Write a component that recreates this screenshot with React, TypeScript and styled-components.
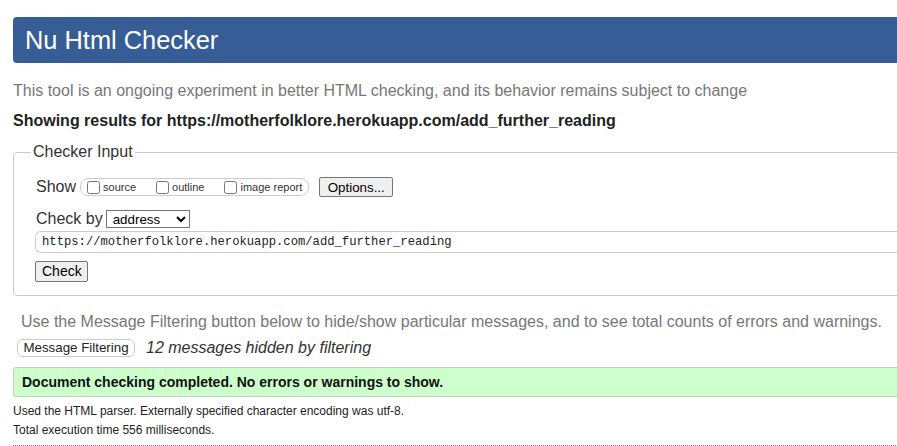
import React from "react";
import styled, { createGlobalStyle } from "styled-components";

const Global = createGlobalStyle`
  html, body { margin: 0; padding: 0; background: #fff; overflow: hidden; }
  body { font-family: "Liberation Sans", Arial, sans-serif; color: #222; }
`;

const Page = styled.div`
  width: 1000px;
  padding-left: 13px;
  box-sizing: border-box;
`;

const Header = styled.h1`
  margin: 17px 0 0;
  height: 46px;
  line-height: 46px;
  padding: 0 12px;
  background: #365d95;
  color: #fff;
  font-size: 25.4px;
  font-weight: normal;
  border-radius: 4px;
`;

const Intro = styled.p`
  margin: 19px 0 0;
  font-size: 16px;
  line-height: 18px;
  color: #777;
`;

const Results = styled.p`
  margin: 12px 0 0;
  font-size: 16px;
  line-height: 18px;
  font-weight: bold;
  color: #222;
`;

const Fieldset = styled.fieldset`
  margin: 13px 0 0;
  padding: 0 0 13px 22px;
  border: 1px solid #ccc;
  border-radius: 4px;
  min-width: 0;
`;

const Legend = styled.legend`
  margin-left: -5px;
  padding: 0 2px;
  font-size: 16px;
  line-height: 18px;
  color: #333;
`;

const Row = styled.div<{ $top: number }>`
  display: flex;
  align-items: center;
  margin-top: ${(p) => p.$top}px;
  min-height: 20px;
`;

const RowLabel = styled.span`
  font-size: 16px;
  line-height: 18px;
  color: #333;
  margin-right: 4px;
`;

const ShowBox = styled.span`
  display: inline-flex;
  align-items: center;
  height: 16px;
  padding: 0 6px;
  border: 1px solid #ccc;
  border-radius: 8px;
`;

const CheckLabel = styled.label<{ $last?: boolean }>`
  display: inline-flex;
  align-items: flex-end;
  font-size: 11px;
  line-height: 13px;
  color: #333;
  margin-right: ${(p) => (p.$last ? 0 : 20)}px;
`;

const Check = styled.input`
  margin: 0 3px 0 0;
  width: 13px;
  height: 13px;
`;

const NativeButton = styled.button`
  font-family: "Liberation Sans", Arial, sans-serif;
  font-size: 13.33px;
  color: #000;
  background: #efefef;
  border: 1px solid #767676;
  border-radius: 2px;
  padding: 1px 6px;
  line-height: 15px;
`;

const OptionsButton = styled(NativeButton)`
  margin-left: 10px;
  width: 74px;
  height: 20px;
`;

const Select = styled.select`
  font-family: "Liberation Sans", Arial, sans-serif;
  font-size: 13.33px;
  width: 84px;
  height: 18px;
  padding: 0 0 0 2px;
  border: 1px solid #767676;
  border-radius: 0;
  color: #000;
  background: #fff;
  margin-left: -1px;
`;

const UrlInput = styled.input`
  display: block;
  box-sizing: border-box;
  width: 100%;
  height: 22px;
  margin: 2px 0 0 -1px;
  padding: 0 6px;
  font-family: "Liberation Mono", "DejaVu Sans Mono", monospace;
  font-size: 12.2px;
  color: #222;
  border: 1px solid #ccc;
  border-right: none;
  border-radius: 6px 0 0 6px;
  outline: none;
`;

const CheckButton = styled(NativeButton)`
  display: block;
  margin: 8px 0 0 -1px;
  width: 53px;
  height: 21px;
  font-size: 14px;
`;

const FilterNote = styled.p`
  margin: 17px 0 0 8px;
  font-size: 16px;
  line-height: 18px;
  color: #777;
`;

const FilterRow = styled.div`
  display: flex;
  align-items: center;
  margin: 8px 0 0 4px;
  height: 18px;
`;

const FilterButton = styled.button`
  font-family: "Liberation Sans", Arial, sans-serif;
  font-size: 13.33px;
  color: #222;
  background: #fff;
  border: 1px solid #ccc;
  border-radius: 6px;
  height: 18px;
  width: 118px;
  padding: 0;
  line-height: 16px;
`;

const HiddenNote = styled.em`
  margin-left: 11px;
  font-size: 16px;
  line-height: 18px;
  color: #333;
`;

const Success = styled.div`
  margin-top: 10px;
  padding: 6px 8px;
  background: #ccffcc;
  border: 1px solid #ccc;
  border-right: none;
  border-radius: 3px 0 0 3px;
  font-size: 14px;
  line-height: 16px;
  font-weight: bold;
  color: #111;
`;

const Details = styled.div`
  margin-top: 5px;
  font-size: 12px;
  line-height: 19px;
  color: #222;
  border-bottom: 1px dotted #777;
  padding-bottom: 5px;
`;

export default function App() {
  return (
    <>
      <Global />
      <Page>
        <Header>Nu Html Checker</Header>
        <Intro>
          This tool is an ongoing experiment in better HTML checking, and its behavior remains
          subject to change
        </Intro>
        <Results>
          Showing results for https://motherfolklore.herokuapp.com/add_further_reading
        </Results>
        <Fieldset>
          <Legend>Checker Input</Legend>
          <Row $top={16}>
            <RowLabel>Show</RowLabel>
            <ShowBox>
              <CheckLabel>
                <Check type="checkbox" />
                source
              </CheckLabel>
              <CheckLabel>
                <Check type="checkbox" />
                outline
              </CheckLabel>
              <CheckLabel $last>
                <Check type="checkbox" />
                image report
              </CheckLabel>
            </ShowBox>
            <OptionsButton>Options...</OptionsButton>
          </Row>
          <Row $top={12}>
            <RowLabel>Check by</RowLabel>
            <Select defaultValue="address">
              <option value="address">address</option>
              <option value="file">file upload</option>
              <option value="text">text input</option>
            </Select>
          </Row>
          <UrlInput
            type="text"
            readOnly
            value="https://motherfolklore.herokuapp.com/add_further_reading"
          />
          <CheckButton>Check</CheckButton>
        </Fieldset>
        <FilterNote>
          Use the Message Filtering button below to hide/show particular messages, and to see
          total counts of errors and warnings.
        </FilterNote>
        <FilterRow>
          <FilterButton>Message Filtering</FilterButton>
          <HiddenNote>12 messages hidden by filtering</HiddenNote>
        </FilterRow>
        <Success>Document checking completed. No errors or warnings to show.</Success>
        <Details>
          <div>Used the HTML parser. Externally specified character encoding was utf-8.</div>
          <div>Total execution time 556 milliseconds.</div>
        </Details>
      </Page>
    </>
  );
}
